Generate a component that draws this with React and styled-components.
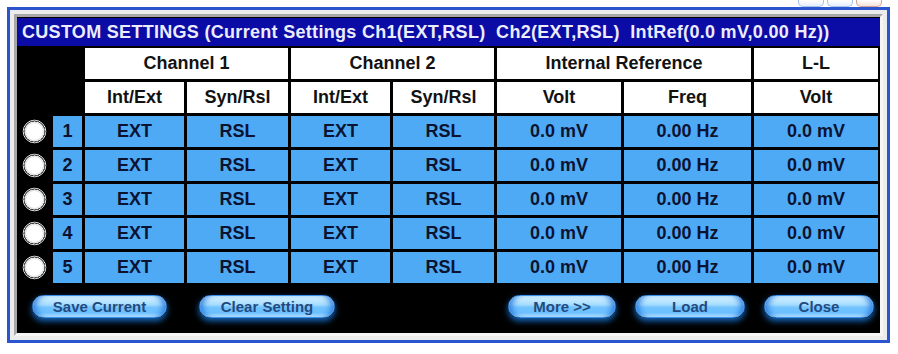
import React from 'react';
import styled, { createGlobalStyle } from 'styled-components';

const Global = createGlobalStyle`
  html, body { margin: 0; padding: 0; background: #ffffff; }
  body {
    font-family: "Liberation Sans", Arial, sans-serif;
    width: 898px; height: 354px; overflow: hidden;
  }
`;

const Page = styled.div`
  display: flex;
  flex-direction: column;
  padding-left: 7px;
`;

const CaptionStrip = styled.div`
  width: 883px;
  height: 7px;
  display: flex;
  justify-content: flex-end;
  align-items: flex-end;
  gap: 3px;
  padding-right: 8px;
  box-sizing: border-box;
  overflow: hidden;
`;

const CaptionBtn = styled.div`
  width: ${p => p.$w}px;
  height: 7px;
  box-sizing: border-box;
  border: 1px solid ${p => (p.$close ? '#d6a094' : '#a9c2ee')};
  border-top: none;
  border-radius: 0 0 5px 5px;
  background: ${p => (p.$close ? 'linear-gradient(#ffffff, #f4e2dc)' : 'linear-gradient(#ffffff, #e6eefb)')};
`;

const Window = styled.div`
  width: 883px;
  box-sizing: border-box;
  border: 3px solid #2a55cf;
  background: #ececec;
  padding: 4px;
`;

const Bezel = styled.div`
  border: 3px solid;
  border-color: #a8a8a8 #f6f6f6 #f6f6f6 #a8a8a8;
  background: #000;
`;

const Panel = styled.div`
  width: 863px;
  height: 316px;
  background: #000;
  display: flex;
  flex-direction: column;
`;

const TitleBar = styled.div`
  height: 28px;
  margin-top: 1px;
  background: #0b0ba6;
  color: #ececff;
  font-weight: bold;
  font-size: 18px;
  letter-spacing: 0.3px;
  line-height: 28px;
  padding-left: 5px;
  white-space: pre;
  overflow: hidden;
`;

const Grid = styled.div`
  margin-top: 2px;
  display: grid;
  grid-template-columns: 33px 29px 99px 101px 99px 101px 124px 127px 124px;
  grid-auto-rows: 31px;
  gap: 3px;
`;

const Blank = styled.div`
  grid-column: span ${p => p.$span || 1};
`;

const HeadCell = styled.div`
  grid-column: span ${p => p.$span || 1};
  background: #ffffff;
  color: #121212;
  font-weight: bold;
  font-size: 18px;
  display: flex;
  align-items: center;
  justify-content: center;
`;

const DataCell = styled.div`
  background: #4faaf6;
  color: #0c1330;
  font-weight: bold;
  font-size: 18px;
  display: flex;
  align-items: center;
  justify-content: center;
`;

const RadioCell = styled.div`
  display: flex;
  align-items: center;
  justify-content: center;
  padding-left: 1px;
`;

const ButtonBar = styled.div`
  margin-top: 12px;
  display: flex;
  justify-content: space-between;
  padding: 0 6px 0 15px;
`;

const ButtonGroup = styled.div`
  display: flex;
  gap: ${p => p.$gap}px;
`;

const GlowButton = styled.button`
  width: ${p => p.$w}px;
  height: 23px;
  border: 1px solid #3b8fe9;
  border-radius: 12px;
  padding: 0;
  font-family: "Liberation Sans", Arial, sans-serif;
  font-weight: bold;
  font-size: 15px;
  color: #234a80;
  background: linear-gradient(to bottom, #d8f3ff 0%, #a8ddff 40%, #72c3ff 55%, #6cc0ff 80%, #c4eaff 100%);
  box-shadow:
    inset 7px 0 6px -4px #2f7fdd,
    inset -7px 0 6px -4px #2f7fdd,
    0 3px 6px rgba(30, 140, 255, 0.75);
  cursor: pointer;
`;

function Radio() {
  return (
    <svg width="25" height="25" viewBox="0 0 25 25">
      <circle cx="12.5" cy="12.5" r="11.3" fill="none" stroke="#f0f0f0" strokeWidth="1" />
      <circle cx="12.5" cy="12.5" r="10.3" fill="#ffffff" stroke="#2e2e2e" strokeWidth="1" strokeDasharray="2 1.5" />
      <circle cx="12.5" cy="12.5" r="9" fill="none" stroke="#dadada" strokeWidth="1" />
    </svg>
  );
}

const rows = [1, 2, 3, 4, 5].map(n => ({
  n,
  values: ['EXT', 'RSL', 'EXT', 'RSL', '0.0 mV', '0.00 Hz', '0.0 mV'],
}));

export default function App() {
  return (
    <>
      <Global />
      <Page>
        <CaptionStrip>
          <CaptionBtn $w={26} />
          <CaptionBtn $w={26} />
          <CaptionBtn $w={26} $close />
        </CaptionStrip>
        <Window>
          <Bezel>
            <Panel>
              <TitleBar>
                {'CUSTOM SETTINGS (Current Settings Ch1(EXT,RSL)  Ch2(EXT,RSL)  IntRef(0.0 mV,0.00 Hz))'}
              </TitleBar>
              <Grid>
                <Blank $span={2} />
                <HeadCell $span={2}>Channel 1</HeadCell>
                <HeadCell $span={2}>Channel 2</HeadCell>
                <HeadCell $span={2}>Internal Reference</HeadCell>
                <HeadCell>L-L</HeadCell>

                <Blank $span={2} />
                <HeadCell>Int/Ext</HeadCell>
                <HeadCell>Syn/Rsl</HeadCell>
                <HeadCell>Int/Ext</HeadCell>
                <HeadCell>Syn/Rsl</HeadCell>
                <HeadCell>Volt</HeadCell>
                <HeadCell>Freq</HeadCell>
                <HeadCell>Volt</HeadCell>

                {rows.map(r => (
                  <React.Fragment key={r.n}>
                    <RadioCell><Radio /></RadioCell>
                    <DataCell>{r.n}</DataCell>
                    {r.values.map((v, i) => (
                      <DataCell key={i}>{v}</DataCell>
                    ))}
                  </React.Fragment>
                ))}
              </Grid>
              <ButtonBar>
                <ButtonGroup $gap={32}>
                  <GlowButton $w={135}>Save Current</GlowButton>
                  <GlowButton $w={136}>Clear Setting</GlowButton>
                </ButtonGroup>
                <ButtonGroup $gap={19}>
                  <GlowButton $w={108}>More &gt;&gt;</GlowButton>
                  <GlowButton $w={110}>Load</GlowButton>
                  <GlowButton $w={110}>Close</GlowButton>
                </ButtonGroup>
              </ButtonBar>
            </Panel>
          </Bezel>
        </Window>
      </Page>
    </>
  );
}
